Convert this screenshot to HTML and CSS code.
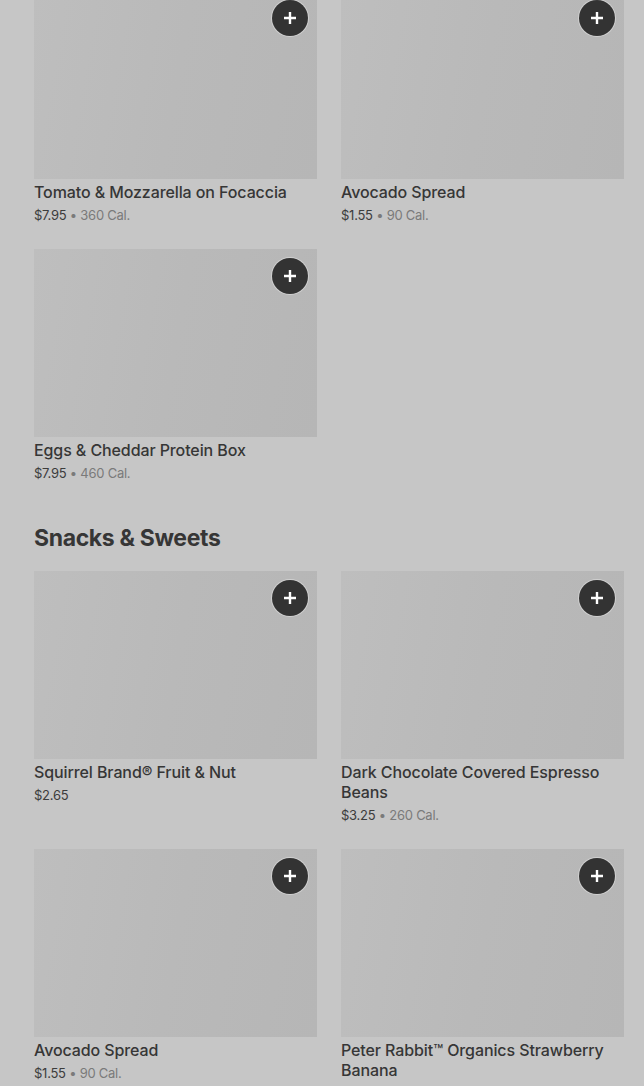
FILE: index.html
```html
<!DOCTYPE html>
<html lang="en">
<head>
    <meta charset="UTF-8">
    <meta name="viewport" content="width=device-width, initial-scale=1.0">
    <title>Menu</title>
    <link rel="stylesheet" href="styles.css">
</head>
<body>

    <div class="content">
        <section class="section">
            <div class="grid">
                <div class="item">
                    <div class="thumb">
                        <button class="add-btn" aria-label="Add">
                            <svg width="14" height="14" viewBox="0 0 14 14"><path d="M7 1v12M1 7h12" stroke="#fff" stroke-width="2.4"/></svg>
                        </button>
                    </div>
                    <div class="item-name">Tomato &amp; Mozzarella on Focaccia</div>
                    <div class="item-meta"><span class="price">$7.95</span> <span class="cal">• 360 Cal.</span></div>
                </div>
                <div class="item">
                    <div class="thumb">
                        <button class="add-btn" aria-label="Add">
                            <svg width="14" height="14" viewBox="0 0 14 14"><path d="M7 1v12M1 7h12" stroke="#fff" stroke-width="2.4"/></svg>
                        </button>
                    </div>
                    <div class="item-name">Avocado Spread</div>
                    <div class="item-meta"><span class="price">$1.55</span> <span class="cal">• 90 Cal.</span></div>
                </div>
                <div class="item">
                    <div class="thumb">
                        <button class="add-btn" aria-label="Add">
                            <svg width="14" height="14" viewBox="0 0 14 14"><path d="M7 1v12M1 7h12" stroke="#fff" stroke-width="2.4"/></svg>
                        </button>
                    </div>
                    <div class="item-name">Eggs &amp; Cheddar Protein Box</div>
                    <div class="item-meta"><span class="price">$7.95</span> <span class="cal">• 460 Cal.</span></div>
                </div>
            </div>
        </section>

        <section class="section">
            <h2 class="section-title">Snacks &amp; Sweets</h2>
            <div class="grid">
                <div class="item">
                    <div class="thumb">
                        <button class="add-btn" aria-label="Add">
                            <svg width="14" height="14" viewBox="0 0 14 14"><path d="M7 1v12M1 7h12" stroke="#fff" stroke-width="2.4"/></svg>
                        </button>
                    </div>
                    <div class="item-name">Squirrel Brand® Fruit &amp; Nut</div>
                    <div class="item-meta"><span class="price">$2.65</span></div>
                </div>
                <div class="item">
                    <div class="thumb">
                        <button class="add-btn" aria-label="Add">
                            <svg width="14" height="14" viewBox="0 0 14 14"><path d="M7 1v12M1 7h12" stroke="#fff" stroke-width="2.4"/></svg>
                        </button>
                    </div>
                    <div class="item-name">Dark Chocolate Covered Espresso Beans</div>
                    <div class="item-meta"><span class="price">$3.25</span> <span class="cal">• 260 Cal.</span></div>
                </div>
                <div class="item">
                    <div class="thumb">
                        <button class="add-btn" aria-label="Add">
                            <svg width="14" height="14" viewBox="0 0 14 14"><path d="M7 1v12M1 7h12" stroke="#fff" stroke-width="2.4"/></svg>
                        </button>
                    </div>
                    <div class="item-name">Avocado Spread</div>
                    <div class="item-meta"><span class="price">$1.55</span> <span class="cal">• 90 Cal.</span></div>
                </div>
                <div class="item">
                    <div class="thumb">
                        <button class="add-btn" aria-label="Add">
                            <svg width="14" height="14" viewBox="0 0 14 14"><path d="M7 1v12M1 7h12" stroke="#fff" stroke-width="2.4"/></svg>
                        </button>
                    </div>
                    <div class="item-name">Peter Rabbit™ Organics Strawberry Banana</div>
                    <div class="item-meta"><span class="price">$1.99</span> <span class="cal">• 80 Cal.</span></div>
                </div>
            </div>
        </section>
    </div>

</body>
</html>
```

FILE: styles.css
```css
body {
    font-family: Inter, "Noto Sans", sans-serif;
    margin: 0;
    padding: 0;
    background-color: #c6c6c6;
    color: #363636;
    overflow: hidden;
}

/* Conteúdo (já rolado um pouco para cima) */
.content {
    margin-top: -9px;
    padding: 0 20px 0 34px;
}

.section {
    margin-bottom: 39px;
}

.section-title {
    font-size: 23px;
    line-height: 32px;
    font-weight: 700;
    letter-spacing: -0.35px;
    margin: 0 0 17px 0;
    color: #363636;
}

.grid {
    display: grid;
    grid-template-columns: 1fr 1fr;
    column-gap: 24px;
    row-gap: 24px;
}

/* Cartão do item */
.thumb {
    position: relative;
    height: 188px;
    background: linear-gradient(100deg, #bebebe 0%, #b9b9b9 50%, #b6b6b6 100%);
}

.add-btn {
    position: absolute;
    top: 9px;
    right: 9px;
    width: 36px;
    height: 36px;
    border-radius: 50%;
    border: none;
    background-color: #333;
    box-shadow: 0 0 0 1px #d0d0d0;
    display: flex;
    align-items: center;
    justify-content: center;
    padding: 0;
    cursor: pointer;
}

.item-name {
    font-size: 16px;
    line-height: 20px;
    font-weight: 500;
    letter-spacing: -0.1px;
    margin-top: 3px;
    color: #363636;
}

.item-meta {
    font-size: 13px;
    line-height: 20px;
    letter-spacing: -0.25px;
    margin-top: 3px;
}

.price {
    color: #3c3c3c;
}

.cal {
    color: #7a7a7a;
}
```
